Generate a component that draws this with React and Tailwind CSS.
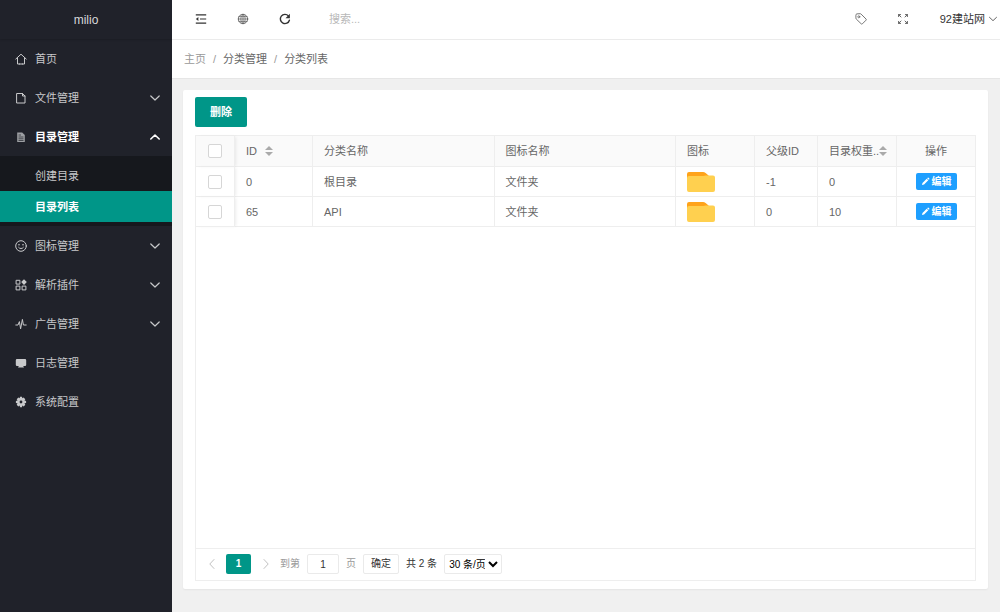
import { useState } from 'react';

const line = { fill: "none", stroke: "currentColor", strokeLinecap: "round", strokeLinejoin: "round" };

const icons = {
  home: <path {...line} d="M.8 6 6 1.2 11.2 6M2.5 5v6h2.2m4.8-6v6H7.3M4.5 11h3" />,
  file: <path {...line} d="M2 1.5h5.5L10 4v7H2zM7.5 1.5V4H10" />,
  doc: (
    <>
      <path fill="currentColor" opacity=".85" d="M2.2 1.5h5L9.8 4v7H2.2z" />
      <path stroke="#20222a" strokeWidth=".7" d="M3.5 4h2.5M3.5 6h5M3.5 7.8h5M3.5 9.5h5" />
    </>
  ),
  smile: (
    <>
      <circle {...line} cx="6" cy="6" r="5.3" />
      <circle fill="currentColor" cx="4" cy="4.8" r=".8" />
      <circle fill="currentColor" cx="8" cy="4.8" r=".8" />
      <path {...line} d="M3.6 7.4c1 1.6 3.8 1.6 4.8 0" />
    </>
  ),
  component: (
    <>
      <path {...line} strokeLinecap="butt" strokeLinejoin="miter" d="M1.1 1.3h3.8v3.8H1.1zM1.1 7.1h3.8v3.8H1.1zM7.1 7.1h3.8v3.8H7.1z" />
      <path fill="currentColor" d="m9 .2 2.8 2.9L9 6 6.2 3.1z" />
    </>
  ),
  pulse: <path {...line} d="M.8 7H3l1.4-3.4 1.2 7.2L7.4 1.4l1 5.6h2.8" />,
  board: <path fill="currentColor" d="M2 2h8q1.2 0 1.2 1.2v4.6Q11.2 9 10 9H8.2l.8 1.6H3L3.8 9H2Q.8 9 .8 7.8V3.2Q.8 2 2 2z" />,
  gear: (
    <path
      fill="currentColor"
      fillRule="evenodd"
      d="M5 .8h2l.3 1.5 1.3-.8 1.7 1.7-.8 1.3 1.6.4v2l-1.6.4.8 1.4-1.6 1.7-1.4-.9-.3 1.7H5l-.3-1.7-1.4.9-1.6-1.7.8-1.4-1.6-.4v-2l1.6-.4-.8-1.3 1.7-1.7 1.3.8zM6 4.6a1.4 1.4 0 1 0 0 2.8 1.4 1.4 0 0 0 0-2.8z"
    />
  ),
  shrink: (
    <>
      <path stroke="currentColor" strokeWidth="1.2" d="M.8 1.8h10.4M5 6h6.2M.8 10.2h10.4" />
      <path fill="currentColor" d="M3.4 4v4L.8 6z" />
    </>
  ),
  globe: (
    <>
      <circle {...line} cx="6" cy="6" r="4.7" />
      <path {...line} strokeWidth=".8" d="M1.3 6h9.4M2 3.6h8M2 8.4h8M6 1.3v9.4M6 1.3c-3 2.6-3 6.8 0 9.4M6 1.3c3 2.6 3 6.8 0 9.4" />
    </>
  ),
  refresh: (
    <>
      <path {...line} strokeWidth="1.4" d="M10.4 7.2A4.6 4.6 0 1 1 9.4 2.9" />
      <path fill="currentColor" d="M10.9.8v4.4H6.5z" />
    </>
  ),
  tag: (
    <>
      <path {...line} strokeWidth=".9" d="M.9 1.9q0-.9.9-1l3.4-.2q.5 0 .9.4l4.9 4.9q.6.6 0 1.2L7.4 10.8q-.6.6-1.2 0L1.3 6.1q-.4-.4-.4-.9z" />
      <circle {...line} strokeWidth=".8" cx="3.8" cy="3.8" r="1" />
    </>
  ),
  full: (
    <path {...line} strokeWidth=".9" d="M1.6 3.6v-2h2M1.6 1.6 4 4M8.4 1.6h2v2M10.4 1.6 8 4M1.6 8.4v2h2M1.6 10.4 4 8M8.4 10.4h2v-2M10.4 10.4 8 8" />
  ),
  down: <path {...line} strokeWidth="1.2" d="M1.8 4 6 8l4.2-4" />,
  up: <path {...line} strokeWidth="1.6" d="M1.8 8 6 4l4.2 4" />,
  prev: <path {...line} d="M8 1.5 3.8 6 8 10.5" />,
  next: <path {...line} d="M4 1.5 8.2 6 4 10.5" />,
  pencil: <path fill="currentColor" d="m1.2 10.8.8-2.9 5.6-5.6 2.1 2.1L4.1 10zM8.2 1.7 9 .9q.5-.4 1 0l1.1 1.1q.4.5 0 1l-.8.8z" />,
};

function Icon({ name, className = "size-3" }) {
  return (
    <svg viewBox="0 0 12 12" className={`shrink-0 ${className}`} aria-hidden="true">
      {icons[name]}
    </svg>
  );
}

const menu = [
  { title: "首页", icon: "home" },
  { title: "文件管理", icon: "file", more: true },
  { title: "目录管理", icon: "doc", open: true, children: ["创建目录", "目录列表"] },
  { title: "图标管理", icon: "smile", more: true },
  { title: "解析插件", icon: "component", more: true },
  { title: "广告管理", icon: "pulse", more: true },
  { title: "日志管理", icon: "board" },
  { title: "系统配置", icon: "gear" },
];

const rows = [
  { id: 0, name: "根目录", iconName: "文件夹", parent: -1, weight: 0 },
  { id: 65, name: "API", iconName: "文件夹", parent: 0, weight: 10 },
];

function Sidebar() {
  return (
    <aside className="w-[172px] shrink-0 bg-[#20222a] text-[#c8c9cb]">
      <div className="h-[39px] flex items-center justify-center text-xs text-[#d8d8da] shadow-[0_1px_2px_rgba(0,0,0,0.15)]">
        milio
      </div>
      <nav>
        {menu.map(item => (
          <div key={item.title}>
            <a
              href="#"
              className={`h-[39px] pl-[15px] pr-[11px] flex items-center gap-2 ${item.open ? "text-white font-bold" : ""}`}
            >
              <Icon name={item.icon} className={item.open ? "size-3 text-[#b4b5b8]" : "size-3"} />
              <span className="grow">{item.title}</span>
              {item.more && <Icon name="down" />}
              {item.open && <Icon name="up" />}
            </a>
            {item.children && (
              <div className="bg-[#16181d] py-1">
                {item.children.map(child => (
                  <a
                    key={child}
                    href="#"
                    className={`h-[31px] pl-[35px] flex items-center ${child === "目录列表" ? "bg-[#009688] text-white font-bold" : ""}`}
                  >
                    {child}
                  </a>
                ))}
              </div>
            )}
          </div>
        ))}
      </nav>
    </aside>
  );
}

function Header() {
  return (
    <header className="h-10 shrink-0 pb-px bg-white border-b border-[#ebebeb] flex items-center text-[#333]">
      <button aria-label="侧边伸缩" className="w-[42px] ml-2 flex justify-center"><Icon name="shrink" /></button>
      <button aria-label="前台" className="w-[42px] flex justify-center text-[#666]"><Icon name="globe" /></button>
      <button aria-label="刷新" className="w-[42px] flex justify-center"><Icon name="refresh" /></button>
      <input
        type="text"
        aria-label="搜索"
        placeholder="搜索..."
        className="w-40 ml-[23px] outline-none placeholder:text-[#b8b8b8]"
      />
      <div className="ml-auto flex items-center">
        <button aria-label="便签" className="w-[42px] flex justify-center text-[#666]"><Icon name="tag" /></button>
        <button aria-label="全屏" className="w-[42px] flex justify-center text-[#555]"><Icon name="full" /></button>
        <button className="ml-4 pr-[2px] flex items-center gap-[3px]">
          92建站网
          <Icon name="down" className="size-[10px] text-[#666]" />
        </button>
      </div>
    </header>
  );
}

function Sort() {
  return (
    <svg viewBox="0 0 8 10" className="w-2 h-[10px] shrink-0" aria-hidden="true">
      <path fill="#aaa" d="M4 0l4 4H0zM4 10l4-4H0z" />
    </svg>
  );
}

function Folder() {
  return (
    <svg viewBox="0 0 28 20" className="w-7 h-5" aria-hidden="true">
      <path fill="#ffa31a" d="M2 0h14q1.5 0 2.6 1l3 2.6V12H0V2Q0 0 2 0z" />
      <path fill="#ffd04f" d="M2 4h14.5q1.2 0 2.2-.4L26 3.6q2 0 2 2V18q0 2-2 2H2q-2 0-2-2V6q0-2 2-2z" />
    </svg>
  );
}

function Check({ label, checked, onChange }) {
  return (
    <input
      type="checkbox"
      aria-label={label}
      checked={checked}
      onChange={onChange}
      className="block mx-auto size-[14px] appearance-none bg-white border border-[#d6d6d6] rounded-xs checked:bg-[#009688]"
    />
  );
}

function DataTable() {
  const [picked, setPicked] = useState([]);
  const all = picked.length === rows.length;

  function toggle(id) {
    setPicked(prev => prev.includes(id) ? prev.filter(p => p !== id) : [...prev, id]);
  }

  const cell = "border-r border-b border-[#eee] px-[11px]";
  const side = "relative border-r border-b border-[#eee] shadow-[2px_0_3px_-1px_rgba(0,0,0,0.08)]";

  return (
    <table className="w-full table-fixed border-separate border-spacing-0 text-left text-[#666]">
      <colgroup>
        <col className="w-[39px]" />
        <col className="w-[78px]" />
        <col />
        <col />
        <col className="w-[79px]" />
        <col className="w-[63px]" />
        <col className="w-[79px]" />
        <col className="w-[78px]" />
      </colgroup>
      <thead>
        <tr className="h-[31px] bg-[#fafafa] *:font-normal">
          <th className={side}>
            <Check label="全选" checked={all} onChange={() => setPicked(all ? [] : rows.map(r => r.id))} />
          </th>
          <th className={cell}><span className="flex items-center gap-2">ID <Sort /></span></th>
          <th className={cell}>分类名称</th>
          <th className={cell}>图标名称</th>
          <th className={cell}>图标</th>
          <th className={cell}>父级ID</th>
          <th className={cell}><span className="flex items-center whitespace-nowrap">目录权重..<Sort /></span></th>
          <th className="border-b border-[#eee] text-center">操作</th>
        </tr>
      </thead>
      <tbody>
        {rows.map(row => (
          <tr key={row.id} className="h-[30px]">
            <td className={side}>
              <Check label={`选择 ${row.name}`} checked={picked.includes(row.id)} onChange={() => toggle(row.id)} />
            </td>
            <td className={cell}>{row.id}</td>
            <td className={cell}>{row.name}</td>
            <td className={cell}>{row.iconName}</td>
            <td className={cell}><Folder /></td>
            <td className={cell}>{row.parent}</td>
            <td className={cell}>{row.weight}</td>
            <td className="border-b border-[#eee]">
              <button className="mx-auto w-[41px] h-[17px] flex items-center justify-center gap-[2px] bg-[#1e9fff] rounded-xs text-white text-[10px] font-bold">
                <Icon name="pencil" className="size-[9px]" />
                编辑
              </button>
            </td>
          </tr>
        ))}
      </tbody>
    </table>
  );
}

function Pager() {
  return (
    <div className="h-8 border-t border-[#eee] pl-[10px] pb-px flex items-center text-[10px] text-[#333] whitespace-nowrap">
      <button aria-label="上一页" className="w-5 h-5 flex items-center text-[#c2c2c2]"><Icon name="prev" /></button>
      <button className="w-[25px] h-5 bg-[#009688] rounded-xs text-white font-bold">1</button>
      <button aria-label="下一页" className="w-[29px] h-5 flex items-center justify-center text-[#c2c2c2]"><Icon name="next" /></button>
      <label htmlFor="page" className="text-[#999]">到第</label>
      <input id="page" type="text" defaultValue="1" className="w-8 h-5 mx-[7px] border border-[#eaeaea] rounded-xs text-center outline-none" />
      <span className="text-[#999]">页</span>
      <button className="w-9 h-5 mx-[7px] border border-[#eaeaea] rounded-xs">确定</button>
      <span>共 2 条</span>
      <select aria-label="每页条数" className="w-[58px] h-5 ml-[7px] border border-[#eaeaea] rounded-xs bg-white text-black">
        <option>30 条/页</option>
      </select>
    </div>
  );
}

function App() {
  return (
    <div className="flex min-h-screen bg-[#f0f0f0] text-[11px] leading-4 font-['Liberation_Sans','Noto_Sans_CJK_SC',sans-serif]">
      <Sidebar />
      <div className="grow min-w-0 flex flex-col">
        <Header />
        <div className="h-[39px] shrink-0 bg-white border-b border-[#e6e6e6] pl-3 flex items-center gap-[7px] text-[#666]">
          <a href="#" className="text-[#999]">主页</a>
          <span className="text-[#999]">/</span>
          <a href="#">分类管理</a>
          <span className="text-[#999]">/</span>
          <span>分类列表</span>
        </div>
        <main className="grow flex pt-[11px] pl-[11px] pr-3 pb-[23px]">
          <div className="grow min-w-0 flex flex-col bg-white rounded-xs px-3 pt-[7px] pb-2 shadow-[0_1px_2px_rgba(0,0,0,0.05)]">
            <button className="w-[52px] h-[30px] shrink-0 bg-[#009688] rounded-xs text-white font-bold">删除</button>
            <div className="grow mt-2 flex flex-col justify-between border border-[#eee]">
              <DataTable />
              <Pager />
            </div>
          </div>
        </main>
      </div>
    </div>
  );
}

export default App
